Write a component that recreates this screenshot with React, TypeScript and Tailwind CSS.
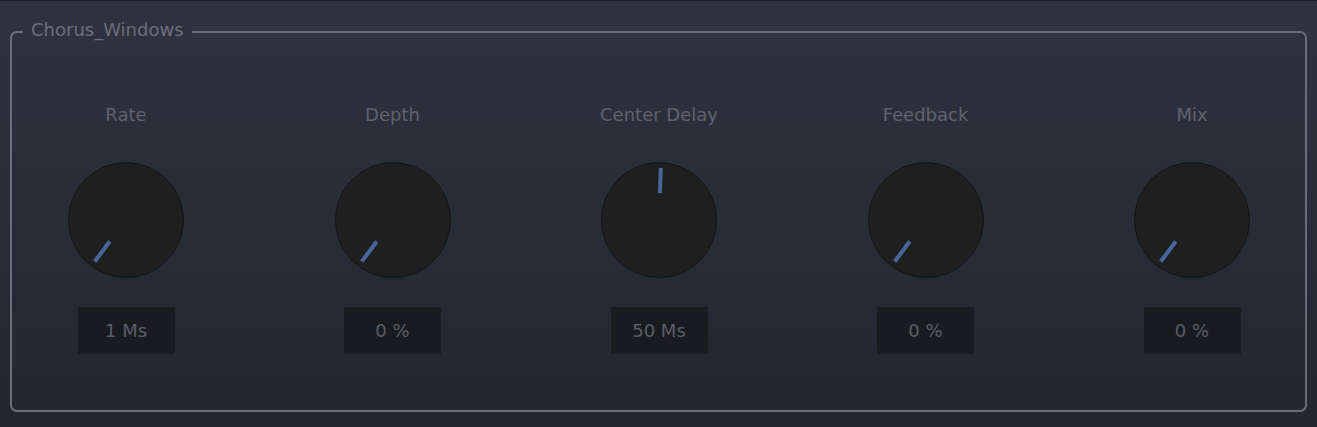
import React from 'react';

type Knob = { label: string; value: string; angle: number };

const knobs: Knob[] = [
  { label: 'Rate', value: '1 Ms', angle: -143 },
  { label: 'Depth', value: '0 %', angle: -143 },
  { label: 'Center Delay', value: '50 Ms', angle: 2 },
  { label: 'Feedback', value: '0 %', angle: -143 },
  { label: 'Mix', value: '0 %', angle: -143 },
];

const Dial: React.FC<{ angle: number }> = ({ angle }) => (
  <svg width="118" height="118" viewBox="0 0 118 118" className="block -mx-[2px]">
    <defs>
      <radialGradient id="knobShadow" cx="50%" cy="50%" r="50%">
        <stop offset="85%" stopColor="#000" stopOpacity="0.35" />
        <stop offset="100%" stopColor="#000" stopOpacity="0" />
      </radialGradient>
    </defs>
    <circle cx="59" cy="60" r="59" fill="url(#knobShadow)" />
    <circle cx="59" cy="59" r="57.5" fill="#1f1f20" stroke="#131417" strokeWidth="1" />
    <g transform={`rotate(${angle} 59 59)`}>
      <line x1="59" y1="32" x2="59" y2="7" stroke="#46679c" strokeWidth="4" />
    </g>
  </svg>
);

const App: React.FC = () => {
  return (
    <div
      className="w-[1317px] h-[427px] bg-gradient-to-b from-[#2f333f] to-[#22262f] border-t border-[#1b1d22] pt-[20px] px-[10px]"
      style={{ fontFamily: '"DejaVu Sans", Verdana, sans-serif' }}
    >
      <fieldset className="h-[391px] border-2 border-[#6a6e7b] rounded-[7px] p-0 m-0 min-w-0">
        <legend className="ml-[11px] px-2 text-[18px] leading-[22px] text-[#6b6f7c]">
          <span className="relative -top-[2px]">Chorus_Windows</span>
        </legend>
        <div className="flex gap-[152.5px] ml-[57px] mt-[61px]">
          {knobs.map((k) => (
            <div key={k.label} className="w-[114px] flex flex-col items-center">
              <div className="h-[22px] leading-[22px] text-[18px] text-[#5f6370] whitespace-nowrap">{k.label}</div>
              <div className="mt-[35px]">
                <Dial angle={k.angle} />
              </div>
              <div className="mt-[28px] w-[97px] h-[47px] bg-[#191b21] flex items-center justify-center text-[18px] text-[#5a5e69]">
                {k.value}
              </div>
            </div>
          ))}
        </div>
      </fieldset>
    </div>
  );
};

export default App;
